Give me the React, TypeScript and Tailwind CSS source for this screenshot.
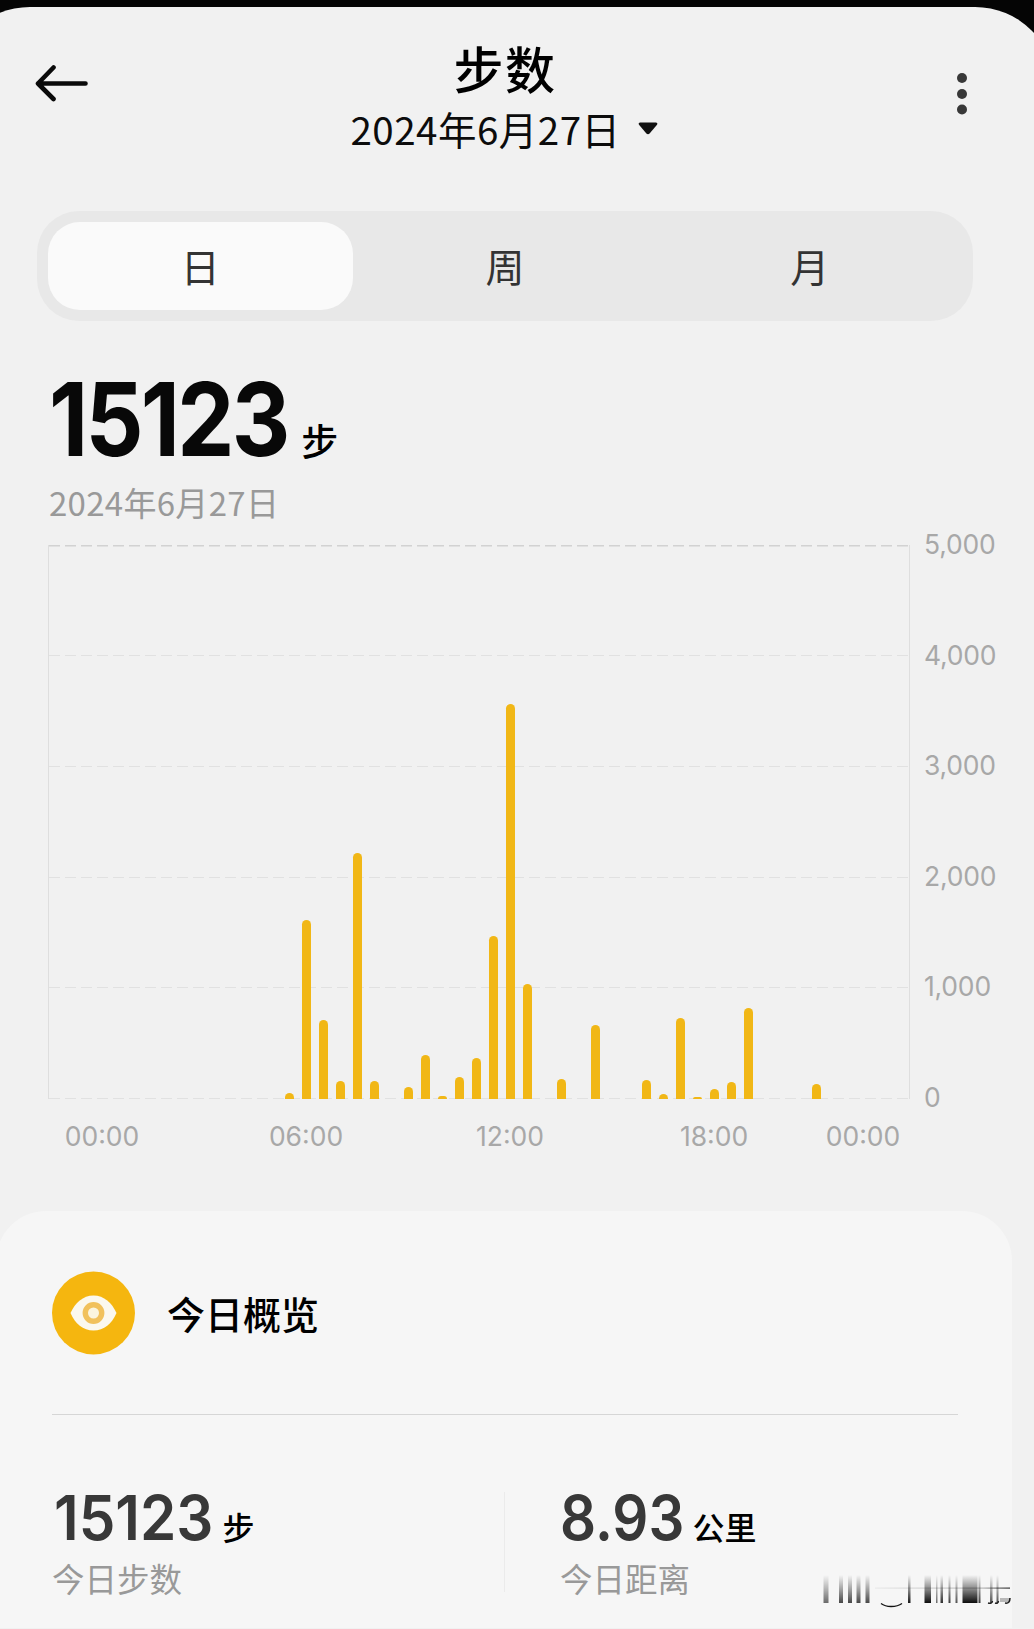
import React, { useState } from 'react';

interface Bar {
  slot: number;
  steps: number;
}

// One slot per half hour, slot 0 is midnight
const BARS: Bar[] = [
  { slot: 11, steps: 50 },
  { slot: 12, steps: 1612 },
  { slot: 13, steps: 716 },
  { slot: 14, steps: 160 },
  { slot: 15, steps: 2222 },
  { slot: 16, steps: 164 },
  { slot: 18, steps: 106 },
  { slot: 19, steps: 395 },
  { slot: 20, steps: 26 },
  { slot: 21, steps: 196 },
  { slot: 22, steps: 367 },
  { slot: 23, steps: 1468 },
  { slot: 24, steps: 3563 },
  { slot: 25, steps: 1036 },
  { slot: 27, steps: 182 },
  { slot: 29, steps: 665 },
  { slot: 32, steps: 172 },
  { slot: 33, steps: 43 },
  { slot: 34, steps: 731 },
  { slot: 35, steps: 18 },
  { slot: 36, steps: 88 },
  { slot: 37, steps: 153 },
  { slot: 38, steps: 817 },
  { slot: 42, steps: 134 },
];

const MAX_STEPS = 5000;
const SLOTS = Array.from({ length: 48 }, (_, i) => BARS.find((b) => b.slot === i)?.steps ?? 0);
const Y_LABELS = ['5,000', '4,000', '3,000', '2,000', '1,000', '0'];
const X_LABELS = [
  { text: '00:00', width: 'w-[108px]' },
  { text: '06:00', width: 'w-[300px]' },
  { text: '12:00', width: 'w-[108px]' },
  { text: '18:00', width: 'w-[300px]' },
];

// x, width and opacity of each faded stripe in the stamp
const STRIPES = [
  [13.5, 5, 0.6],
  [29, 4, 0.75],
  [38, 4, 0.75],
  [46.5, 4, 0.75],
  [55.5, 4, 0.75],
  [98, 2.5, 0.95],
  [114.5, 6.5, 1],
  [126, 1.5, 0.6],
  [130.5, 2.5, 0.85],
  [138.5, 2, 0.8],
  [145.5, 2, 0.7],
  [152.5, 15, 1],
  [168.5, 2, 0.8],
  [180, 2.5, 0.7],
  [186.5, 2, 0.7],
];

const Header: React.FC = () => (
  <header className="flex h-[204px] pl-[35px]">
    <button className="mt-[57px] w-[76px] h-[40px] cursor-pointer">
      <svg width="54" height="40" viewBox="0 0 54 40" fill="none" stroke="#0a0a0a" strokeWidth="4.6" strokeLinecap="round" strokeLinejoin="round">
        <path d="M18.5 3.5 L3 19.5 L18.5 35 M3 19.5 H50.5" />
      </svg>
    </button>
    <div className="flex flex-col items-center w-[786px] mr-[60px] pt-[30px]">
      <h1 className="text-[50px] leading-[60px] font-medium tracking-[1.5px] pl-[2px] text-black">步数</h1>
      <div className="flex items-center gap-[17px] mt-px text-[38.5px] leading-[60px] tracking-[0.5px] text-[#0c0c0c]">
        <span>2024年6月27日</span>
        <svg width="20" height="13" viewBox="0 0 20 13">
          <path d="M2 0.5 H18 Q20.3 1 18.8 3 L11.6 11.5 Q10 13 8.4 11.5 L1.2 3 Q-0.3 1 2 0.5Z" fill="#111" />
        </svg>
      </div>
    </div>
    <button className="mt-[65px] w-[10px] h-[44px] cursor-pointer">
      <svg width="10" height="44" viewBox="0 0 10 44" fill="#383838">
        <circle cx="5" cy="6" r="5" />
        <circle cx="5" cy="22" r="5" />
        <circle cx="5" cy="37.5" r="5" />
      </svg>
    </button>
  </header>
);

const StepChart: React.FC = () => (
  <div className="mt-[20px] ml-[48px]">
    <div className="flex">
      <div className="relative w-[862px] h-[554px] border-x border-[#dedede]">
        {/* Grid */}
        <svg className="absolute inset-0" width="860" height="554" fill="none" strokeDasharray="11 5">
          <path d="M0 0.5 H860" stroke="#d2d2d2" strokeWidth="2" />
          <path d="M0 110.5 H860 M0 221.5 H860 M0 332.5 H860 M0 442.5 H860 M0 553.5 H860" stroke="#e1e1e1" />
        </svg>
        {/* Bars */}
        <div className="relative flex items-end h-full pl-[44.5px]">
          {SLOTS.map((steps, i) => (
            <div key={i} className="flex items-end justify-center w-[17px] h-full shrink-0">
              {steps > 0 && (
                <div
                  className="w-[9px] rounded-t-[4.5px] bg-[#f1b716]"
                  style={{ height: `${(steps / MAX_STEPS) * 100}%` }}
                />
              )}
            </div>
          ))}
        </div>
      </div>
      <div className="flex flex-col justify-between -my-[16px] pl-[14px] h-[583px] font-[Inter] text-[26.5px] leading-[30px] tracking-[-0.2px] text-[#a8a8a8]">
        {Y_LABELS.map((label) => (
          <span key={label}>{label}</span>
        ))}
      </div>
    </div>
    <div className="flex mt-[21px] font-[Inter] text-[26.5px] leading-[32px] text-[#a8a8a8]">
      {X_LABELS.map((label) => (
        <span key={label.text} className={`${label.width} shrink-0 text-center`}>
          {label.text}
        </span>
      ))}
      <span className="-ml-[55px] w-[108px] text-center">00:00</span>
    </div>
  </div>
);

interface StatProps {
  value: string;
  unit: string;
  label: string;
  valueClass: string;
}

const Stat: React.FC<StatProps> = ({ value, unit, label, valueClass }) => (
  <div>
    <div className="flex items-baseline gap-[9px] h-[72px]">
      <span className={`origin-left font-[Inter] text-[62px] leading-[72px] font-semibold text-[#383838] ${valueClass}`}>
        {value}
      </span>
      <span className="text-[32px] leading-[40px] font-medium text-black">{unit}</span>
    </div>
    <div className="mt-[4px] text-[32.5px] leading-[40px] text-[#999]">{label}</div>
  </div>
);

const Stamp: React.FC = () => (
  <svg className="absolute left-[814px] top-[353px]" width="210" height="50" viewBox="0 0 210 50" fill="none">
    <defs>
      <linearGradient id="fade" x1="0" y1="11" x2="0" y2="39" gradientUnits="userSpaceOnUse">
        <stop offset="0" stopColor="#000" stopOpacity="0" />
        <stop offset="0.5" stopColor="#000" stopOpacity="0.45" />
        <stop offset="1" stopColor="#000" stopOpacity="0.95" />
      </linearGradient>
      <linearGradient id="line" x1="65" y1="0" x2="200" y2="0" gradientUnits="userSpaceOnUse">
        <stop offset="0" stopColor="#000" stopOpacity="0.05" />
        <stop offset="0.8" stopColor="#000" stopOpacity="0.25" />
        <stop offset="1" stopColor="#000" stopOpacity="0.8" />
      </linearGradient>
    </defs>
    {STRIPES.map(([x, width, opacity]) => (
      <rect key={x} x={x} y="11" width={width} height="28" fill="url(#fade)" opacity={opacity} />
    ))}
    <path d="M71 39.5 Q75 42.5 81 42.5 Q88 42.5 92 39.5" stroke="#111" strokeWidth="1.3" />
    <rect x="65" y="23.5" width="135" height="1.2" fill="url(#line)" />
    <path d="M178 39 Q182 40 182.5 37 M185 39 Q188 40 188.5 37 M195 39 Q200 40 200 34" stroke="#222" strokeWidth="1.5" />
    <rect x="190" y="34" width="10" height="4" fill="#000" opacity="0.25" />
  </svg>
);

export default function App() {
  const [tab, setTab] = useState('日');

  return (
    <div className="w-[1034px] h-[1629px] overflow-hidden bg-[#050505] pt-[7px] font-['Noto_Sans_CJK_SC',sans-serif]">
      <div className="-ml-[50px] w-[1105px] h-[1622px] rounded-t-[80px] bg-[#f1f1f1] pl-[50px] pr-[21px]">
        <Header />

        {/* Range tabs */}
        <div className="flex ml-[37px] w-[936px] h-[110px] p-[11px] rounded-[42px] bg-[#e8e8e8]">
          {['日', '周', '月'].map((t) => (
            <button
              key={t}
              onClick={() => setTab(t)}
              className={`flex-1 pb-[2px] rounded-[32px] text-[39px] leading-[86px] text-[#333] cursor-pointer ${
                tab === t ? 'bg-[#fafafa]' : ''
              }`}
            >
              {t}
            </button>
          ))}
        </div>

        {/* Daily total */}
        <div className="ml-[49px] mt-[38px]">
          <div className="flex items-baseline gap-[13px] h-[120px]">
            <span className="origin-left scale-x-[0.89] -mr-[29px] font-[Inter] text-[102px] leading-[120px] font-bold tracking-[-3px] text-[#080808]">
              15123
            </span>
            <span className="text-[37px] leading-[50px] font-medium text-black">步</span>
          </div>
          <div className="text-[33px] leading-[46px] tracking-[0.3px] text-[#999]">2024年6月27日</div>
        </div>

        <StepChart />

        {/* Overview card */}
        <section className="relative mt-[59px] -ml-[4px] w-[1016px] h-[417px] rounded-t-[50px] bg-[#f6f6f6] pl-[56px] pt-[60px]">
          <div className="flex items-center gap-[31px] h-[84px]">
            <svg width="84" height="84" viewBox="0 0 84 84">
              <circle cx="41.5" cy="42" r="41.5" fill="#f5b60f" />
              <path d="M18.5 42 C23 32 31 24.5 41.5 24.5 S60 32 64.5 42 C60 52.5 52 59.5 41.5 59.5 S23 52.5 18.5 42Z" fill="#fbf8ee" />
              <circle cx="41.5" cy="42" r="8.2" fill="#fbf5df" stroke="#f1c15c" strokeWidth="5.4" />
            </svg>
            <h2 className="text-[38px] leading-[56px] font-medium text-black">今日概览</h2>
          </div>
          <div className="mt-[59px] w-[906px] h-px bg-[#d6d6d6]" />
          <div className="flex mt-[67px]">
            <div className="w-[452px]">
              <Stat value="15123" unit="步" label="今日步数" valueClass="scale-x-[0.94] ml-[2px] -mr-[10px]" />
            </div>
            <div className="mt-[10px] w-px h-[100px] bg-[#ebebeb]" />
            <div className="pl-[55px]">
              <Stat value="8.93" unit="公里" label="今日距离" valueClass="scale-x-[0.91] -mr-[13px]" />
            </div>
          </div>
          <Stamp />
        </section>
      </div>
    </div>
  );
}
